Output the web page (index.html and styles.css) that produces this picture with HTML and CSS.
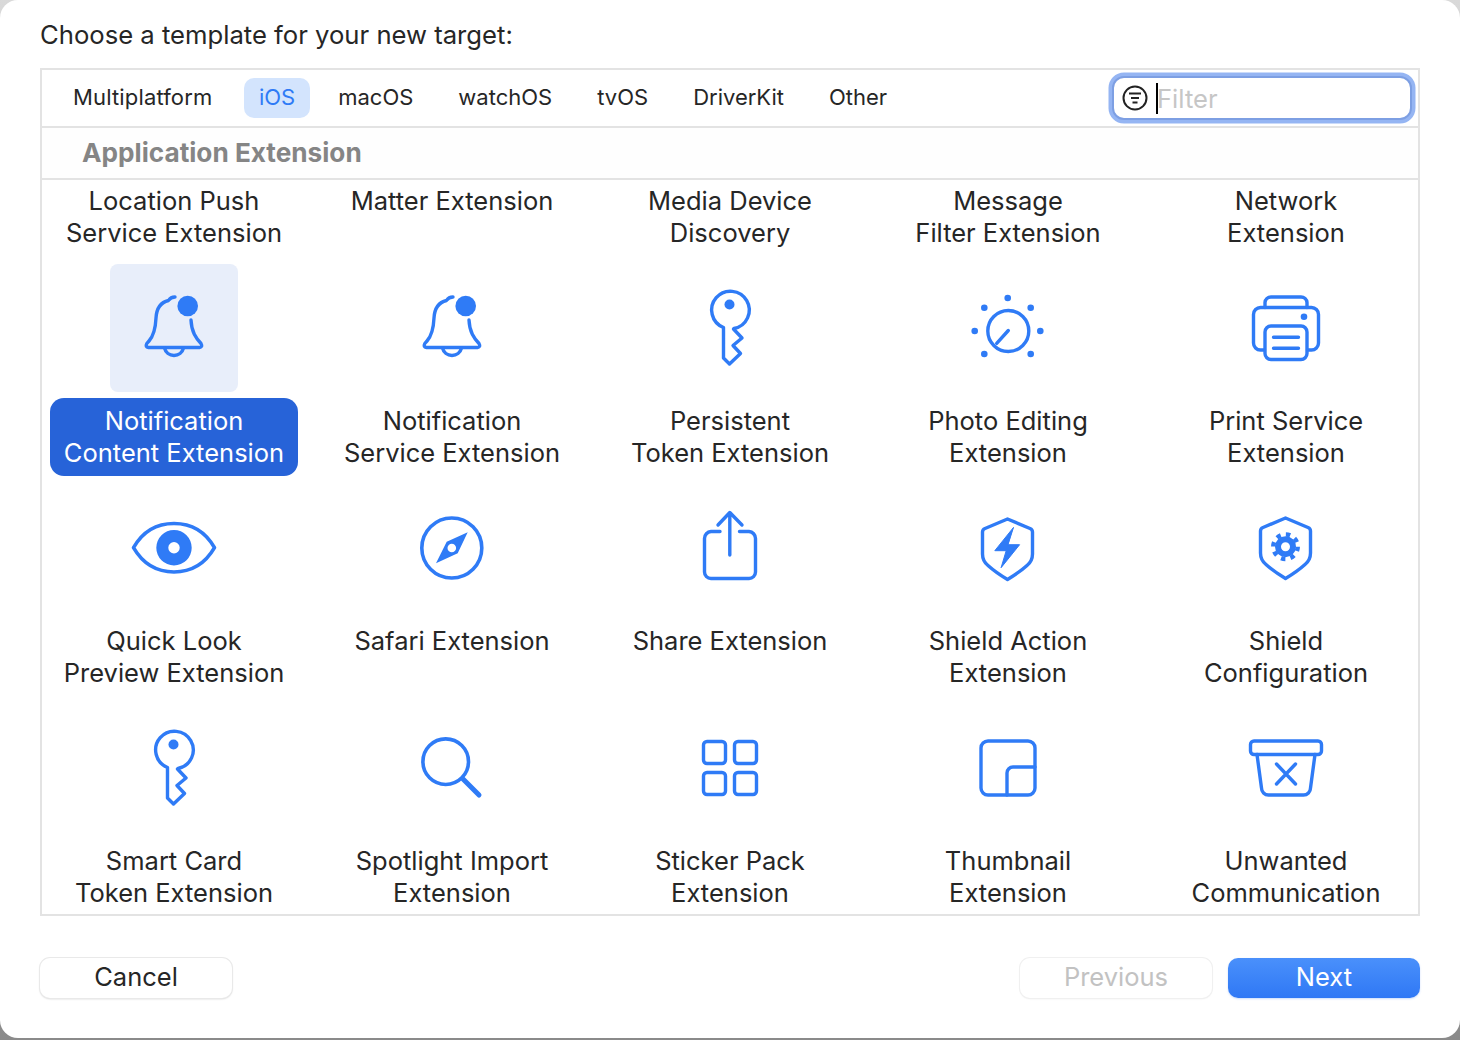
FILE: index.html
```html
<!DOCTYPE html>
<html lang="en">
<head>
<meta charset="utf-8">
<title>Choose a template</title>
<link rel="stylesheet" href="styles.css">
</head>
<body>
<main class="sheet">
  <h1 class="title">Choose a template for your new target:</h1>
  <section class="box">
    <div class="toolbar">
      <nav class="tabs">
        <span class="tab tab-first">Multiplatform</span>
        <span class="tab tab-active">iOS</span>
        <span class="tab">macOS</span>
        <span class="tab">watchOS</span>
        <span class="tab">tvOS</span>
        <span class="tab">DriverKit</span>
        <span class="tab">Other</span>
      </nav>
      <div class="filter">
        <svg class="filter-icon" width="26" height="26" viewBox="0 0 26 26"><circle cx="13" cy="13" r="11.5"/><path d="M7 8.500H19M9 13H17M10.500 17.500H15.500"/></svg>
        <span class="caret"></span>
        <span class="filter-text">Filter</span>
      </div>
    </div>
    <h2 class="section">Application Extension</h2>
    <div class="grid">
      <div class="cell"><div class="label">Location Push<br>Service Extension</div></div>
      <div class="cell"><div class="label">Matter Extension</div></div>
      <div class="cell"><div class="label">Media Device<br>Discovery</div></div>
      <div class="cell"><div class="label">Message<br>Filter Extension</div></div>
      <div class="cell"><div class="label">Network<br>Extension</div></div>

      <div class="cell">
        <div class="tile tile-selected"><svg class="icon" viewBox="0 0 128 128"><path d="M65 33C62 33 60 34 58.500 36.500C50 38.500 46.500 45 46 54C45.500 65 43.500 72 39 77L36.800 79.500Q35 83 38.500 83.500H89.500Q93 83 91 79.500C86 74 81.500 68 81 56"/><path d="M54.500 84A9.800 10 0 0 0 73.500 84"/><circle class="fill" cx="77.700" cy="42" r="10.300"/></svg></div>
        <div class="label label-selected">Notification<br>Content Extension</div>
      </div>
      <div class="cell">
        <div class="tile"><svg class="icon" viewBox="0 0 128 128"><path d="M65 33C62 33 60 34 58.500 36.500C50 38.500 46.500 45 46 54C45.500 65 43.500 72 39 77L36.800 79.500Q35 83 38.500 83.500H89.500Q93 83 91 79.500C86 74 81.500 68 81 56"/><path d="M54.500 84A9.800 10 0 0 0 73.500 84"/><circle class="fill" cx="77.700" cy="42" r="10.300"/></svg></div>
        <div class="label">Notification<br>Service Extension</div>
      </div>
      <div class="cell">
        <div class="tile"><svg class="icon" viewBox="0 0 128 128"><path d="M57.500 63.500A18.800 18.800 0 1 1 68 64.500L67.500 65L76 74L67 81.500L74.500 89.500L63.500 100L57.500 94Z"/><circle class="fill" cx="63.500" cy="40.500" r="5"/></svg></div>
        <div class="label">Persistent<br>Token Extension</div>
      </div>
      <div class="cell">
        <div class="tile"><svg class="icon" viewBox="0 0 128 128"><circle cx="64.300" cy="67" r="20.500"/><path d="M52.700 79.300L64.300 66.500"/><g class="fill"><circle cx="63.700" cy="34" r="3.300"/><circle cx="40.300" cy="43.700" r="3.300"/><circle cx="86.700" cy="43.700" r="3.300"/><circle cx="30.700" cy="67" r="3.300"/><circle cx="96.300" cy="67" r="3.300"/><circle cx="40.300" cy="90" r="3.300"/><circle cx="86.700" cy="90" r="3.300"/></g></svg></div>
        <div class="label">Photo Editing<br>Extension</div>
      </div>
      <div class="cell">
        <div class="tile"><svg class="icon" viewBox="0 0 128 128"><path d="M42.500 86H38.500A7 7 0 0 1 31.500 79V50.500A7 7 0 0 1 38.500 43.500H89.500A7 7 0 0 1 96.500 50.500V79A7 7 0 0 1 89.500 86H85.500"/><path d="M43 43.500V38.500A6 6 0 0 1 49 33H79A6 6 0 0 1 85 38.500V43.500"/><rect x="43" y="62" width="42" height="33.500" rx="6"/><path d="M51.500 73.300H76.500M51.500 84.300H76.500"/><circle class="fill" cx="82" cy="52.700" r="3.300"/></svg></div>
        <div class="label">Print Service<br>Extension</div>
      </div>

      <div class="cell">
        <div class="tile"><svg class="icon" viewBox="0 0 128 128"><path class="thick" d="M23.500 63.700C33 47 47 39.500 64 39.500C81 39.500 95 47 104.500 63.700C95 80 81 88 64 88C47 88 33 80 23.500 63.700Z"/><path class="fill" fill-rule="evenodd" d="M64 46A17.700 17.700 0 1 1 64 81.400A17.700 17.700 0 1 1 64 46ZM64 58A5.700 5.700 0 1 0 64 69.400A5.700 5.700 0 1 0 64 58Z"/></svg></div>
        <div class="label">Quick Look<br>Preview Extension</div>
      </div>
      <div class="cell">
        <div class="tile"><svg class="icon" viewBox="0 0 128 128"><circle class="thick" cx="63.800" cy="64" r="30"/><path class="fill" fill-rule="evenodd" d="M79.700 48.300L69.700 69.300L48 79.300L58.700 57.700ZM63.800 59.700A4.300 4.300 0 1 0 63.800 68.300A4.300 4.300 0 1 0 63.800 59.700Z"/></svg></div>
        <div class="label">Safari Extension</div>
      </div>
      <div class="cell">
        <div class="tile"><svg class="icon" viewBox="0 0 128 128"><path d="M54 47.500H45A7 7 0 0 0 38.500 54.500V88A6.500 6.500 0 0 0 45 94.500H83A6.500 6.500 0 0 0 89.500 88V54.500A7 7 0 0 0 83 47.500H73.500"/><path d="M63.800 71V29M52 41L63.800 28.500L76 41"/></svg></div>
        <div class="label">Share Extension</div>
      </div>
      <div class="cell">
        <div class="tile"><svg class="icon" viewBox="0 0 128 128"><path d="M63.500 35L86 44.500Q88.500 45.500 88.500 48V70Q88.500 77 83 81.500C78 86 71 91 63.500 95.500C56 91 49 86 44 81.500Q38.500 77 38.500 70V48Q38.500 45.500 41 44.500Z"/><path class="fill bolt" d="M69.300 43.700L50.800 66.700H62.200L57.100 83.700L75.600 60.700H64.300Z"/></svg></div>
        <div class="label">Shield Action<br>Extension</div>
      </div>
      <div class="cell">
        <div class="tile"><svg class="icon" viewBox="0 0 128 128"><path d="M63.500 34L86 43.500Q88.500 44.500 88.500 47V69Q88.500 76 83 80.500C78 85 71 90 63.500 94.500C56 90 49 85 44 80.500Q38.500 76 38.500 69V47Q38.500 44.500 41 43.500Z"/><circle class="gear-ring" cx="63.500" cy="62.700" r="7.500"/><circle class="gear-teeth" cx="63.500" cy="62.700" r="12.200"/></svg></div>
        <div class="label">Shield<br>Configuration</div>
      </div>

      <div class="cell">
        <div class="tile"><svg class="icon" viewBox="0 0 128 128"><path d="M57.500 63.500A18.800 18.800 0 1 1 68 64.500L67.500 65L76 74L67 81.500L74.500 89.500L63.500 100L57.500 94Z"/><circle class="fill" cx="63.500" cy="40.500" r="5"/></svg></div>
        <div class="label">Smart Card<br>Token Extension</div>
      </div>
      <div class="cell">
        <div class="tile"><svg class="icon" viewBox="0 0 128 128"><circle class="thick" cx="57.700" cy="57.700" r="22.800"/><path class="handle" d="M75 75L91 91"/></svg></div>
        <div class="label">Spotlight Import<br>Extension</div>
      </div>
      <div class="cell">
        <div class="tile"><svg class="icon" viewBox="0 0 128 128"><rect x="37.500" y="37.500" width="22" height="22" rx="3.500"/><rect x="68.500" y="37.500" width="22" height="22" rx="3.500"/><rect x="37.500" y="68.500" width="22" height="22" rx="3.500"/><rect x="68.500" y="68.500" width="22" height="22" rx="3.500"/></svg></div>
        <div class="label">Sticker Pack<br>Extension</div>
      </div>
      <div class="cell">
        <div class="tile"><svg class="icon" viewBox="0 0 128 128"><rect x="37" y="37" width="54" height="54" rx="7"/><path d="M63 91V69A6 6 0 0 1 69 63H91"/></svg></div>
        <div class="label">Thumbnail<br>Extension</div>
      </div>
      <div class="cell">
        <div class="tile"><svg class="icon" viewBox="0 0 128 128"><rect x="28.500" y="37" width="71" height="13.500" rx="3.500"/><path d="M35 50.500L39.500 84A7 7 0 0 0 46.500 91H81.500A7 7 0 0 0 88.500 84L93 50.500"/><path d="M54.500 60L73.500 80M73.500 60L54.500 80"/></svg></div>
        <div class="label">Unwanted<br>Communication</div>
      </div>
    </div>
  </section>
  <footer class="footer">
    <button class="btn" type="button">Cancel</button>
    <div class="footer-right">
      <button class="btn btn-disabled" type="button">Previous</button>
      <button class="btn btn-primary" type="button">Next</button>
    </div>
  </footer>
</main>
</body>
</html>
```
FILE: styles.css
```css
* { box-sizing: border-box; }
html, body { margin: 0; padding: 0; }
body {
  width: 1460px;
  height: 1040px;
  overflow: hidden;
  background: linear-gradient(#d9d9d9, #8a8a8a);
  font-family: Inter, "Liberation Sans", sans-serif;
  color: #262626;
}
.sheet {
  height: 1038px;
  background: #fff;
  border-radius: 18px;
  padding: 18px 40px 0;
}
.title {
  margin: 0 0 16px;
  height: 34px;
  font-size: 25.650px;
  line-height: 34px;
  font-weight: 400;
}
.box {
  height: 848px;
  border: 2px solid #e3e3e3;
  overflow: hidden;
}
.toolbar {
  height: 58px;
  display: flex;
  align-items: center;
  justify-content: space-between;
  padding: 0 6px 0 16px;
  border-bottom: 2px solid #e3e3e3;
}
.tabs { display: flex; gap: 15px; }
.tab {
  height: 40px;
  line-height: 38px;
  padding: 0 15px;
  font-size: 22px;
  border-radius: 10px;
}
.tab-first { letter-spacing: 0.150px; }
.tab-active { margin: 0 -1.500px 0 2px; padding: 0 14.500px; background: #d3e4fd; color: #2f7bf6; }
.filter {
  width: 300px;
  height: 44px;
  display: flex;
  align-items: center;
  padding-left: 8px;
  background: #fff;
  border: 2px solid #7d9fe3;
  border-radius: 12px;
  box-shadow: 0 0 0 3.500px #95b5f3;
}
.filter-icon { fill: none; stroke: #222; stroke-width: 2; flex: none; }
.caret { width: 2px; height: 31px; margin: 0 -1px 0 8px; background: #000; flex: none; }
.filter-text { font-size: 25.600px; color: #c6c6c6; }
.section {
  margin: 0;
  height: 52px;
  padding: 0 0 0 40px;
  border-bottom: 2px solid #e3e3e3;
  background: #fefefe;
  font-size: 26.200px;
  line-height: 50px;
  font-weight: 700;
  color: #858585;
}
.grid {
  margin-top: -2px;
  padding: 0 8px;
  display: grid;
  grid-template-columns: repeat(5, 248px);
  column-gap: 30px;
  row-gap: 8px;
}
.cell { display: flex; flex-direction: column; align-items: center; }
.tile { width: 128px; height: 128px; margin-bottom: 6px; border-radius: 8px; }
.tile-selected { background: #e8eefa; }
.icon {
  display: block;
  width: 128px;
  height: 128px;
  fill: none;
  stroke: #2f7bf6;
  stroke-width: 3.400;
  stroke-linecap: round;
  stroke-linejoin: round;
}
.icon .fill { fill: #2f7bf6; stroke: none; }
.icon .bolt { stroke: #2f7bf6; stroke-width: 1; }
.icon .thick { stroke-width: 3.600; }
.icon .handle { stroke-width: 5; }
.icon .gear-ring { stroke-width: 6; }
.icon .gear-teeth { stroke-width: 4.500; stroke-dasharray: 4.400 5.180; stroke-linecap: butt; }
.label {
  width: 100%;
  height: 78px;
  padding: 7px 0;
  text-align: center;
  font-size: 25.500px;
  line-height: 32px;
  border-radius: 14px;
}
.label-selected { background: #2763d8; color: #fff; }
.footer {
  margin-top: 42px;
  display: flex;
  justify-content: space-between;
}
.footer-right { display: flex; gap: 16px; }
.btn {
  width: 192px;
  height: 40px;
  padding: 0 0 2px;
  border: 0;
  border-radius: 10px;
  background: #fff;
  font-family: inherit;
  font-size: 25.500px;
  line-height: 36px;
  color: #262626;
  box-shadow: 0 0 0 1px #e9e9e9, 0 1px 2px rgba(0, 0, 0, 0.22);
}
.btn-disabled {
  color: #c2c2c2;
  box-shadow: 0 0 0 1px #f0f0f0, 0 1px 2px rgba(0, 0, 0, 0.08);
}
.btn-primary {
  background: linear-gradient(#4a90fb, #2f78f5);
  color: #fff;
  box-shadow: 0 1px 2px rgba(47, 120, 245, 0.25);
}
```
